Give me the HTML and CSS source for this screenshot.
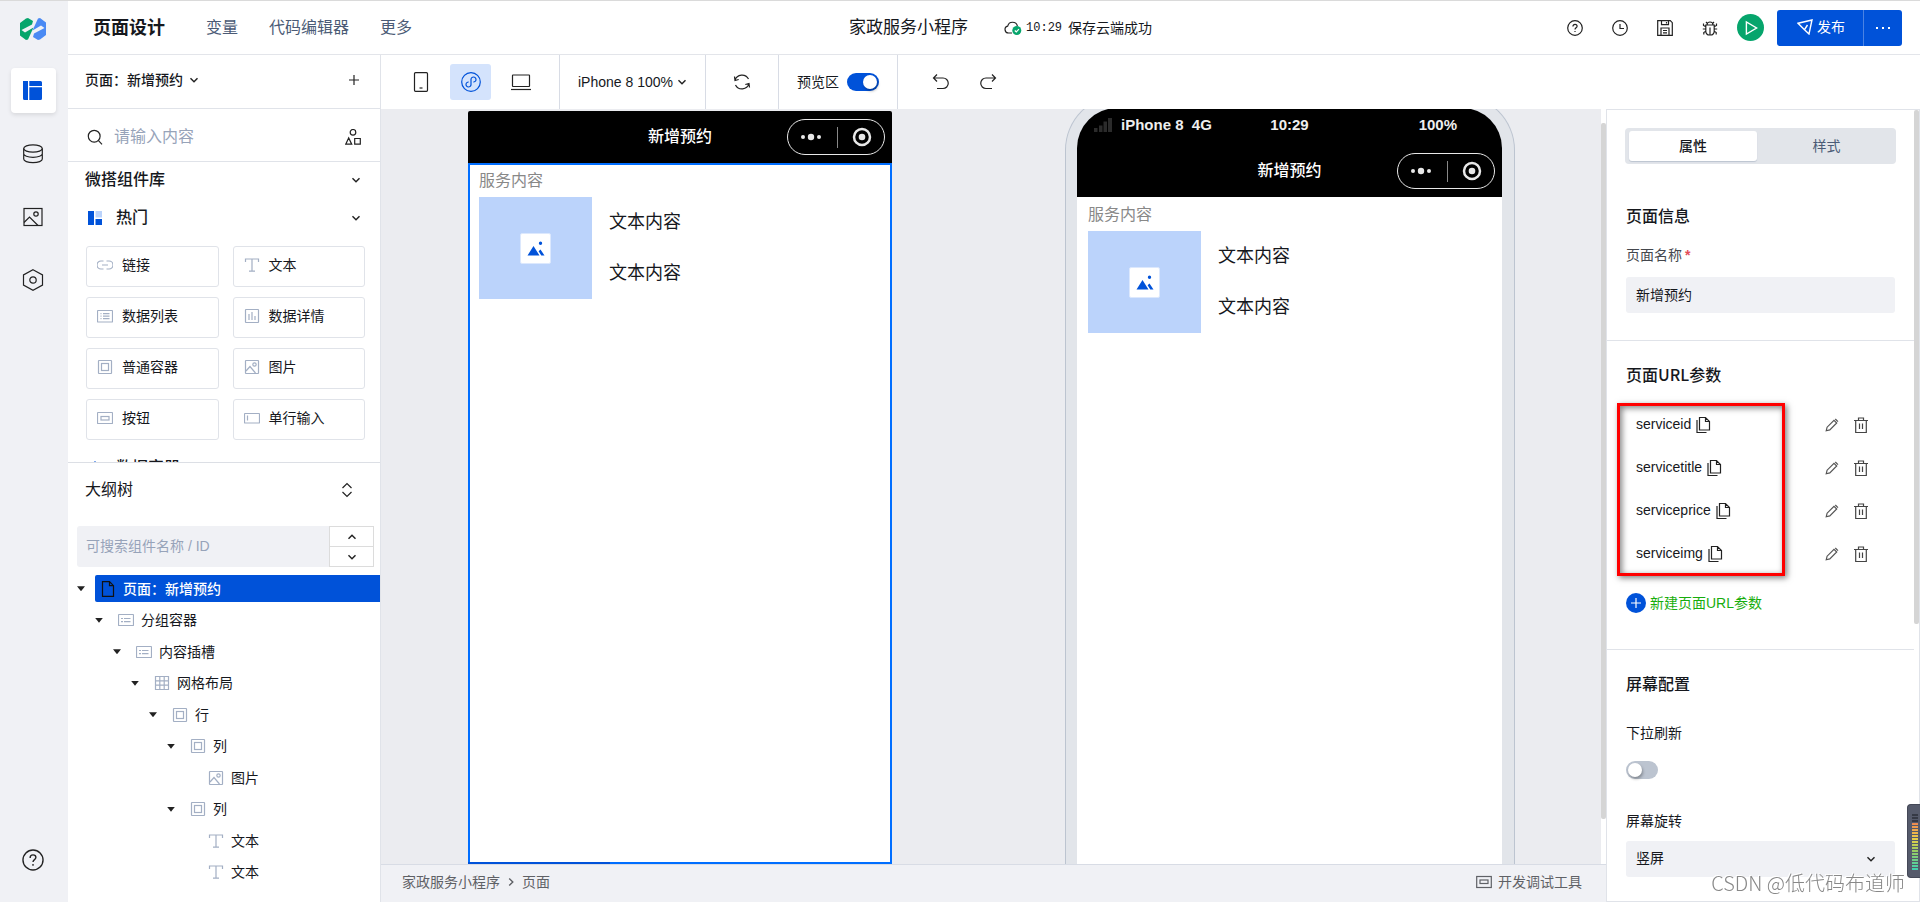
FILE: index.html
```html
<!DOCTYPE html>
<html lang="zh-CN">
<head>
<meta charset="utf-8">
<title>页面设计</title>
<link rel="stylesheet" href="styles.css">
</head>
<body>
<svg class="sprite" aria-hidden="true">
  <symbol id="chev" viewBox="0 0 10 10"><path d="M1.5 3.2 5 6.8 8.500 3.2"/></symbol>
  <symbol id="img" viewBox="0 0 16 16"><rect x="1.500" y="1.500" width="13" height="13" rx=".5"/><circle cx="10.500" cy="5.500" r="1.700"/><path d="m2 12 4-4.500 5.500 6.500"/></symbol>
  <symbol id="text" viewBox="0 0 16 16"><path d="M1.500 5V2h13v3M8 2v12M5 14.200h6"/></symbol>
  <symbol id="box" viewBox="0 0 16 16"><rect x="1.500" y="1.500" width="13" height="13" rx=".5"/><rect x="4.500" y="4.500" width="7" height="7"/></symbol>
  <symbol id="list" viewBox="0 0 16 16"><rect x=".5" y="2.500" width="15" height="11.500" rx=".5"/><path d="M3.500 5.700h1M6 5.700h6.500M3.500 8.200h1M6 8.200h6.500M3.500 10.700h1M6 10.700h6.500"/></symbol>
  <symbol id="group" viewBox="0 0 16 16"><rect x=".5" y="2.500" width="15" height="11" rx=".5"/><path d="M3 6.500h2M6 6.500h6.500M3 9.700h2M6 9.700h6.500"/></symbol>
  <symbol id="grid" viewBox="0 0 16 16"><path d="M1.500 1.500h13v13h-13zM1.500 5.800h13M1.500 10.200h13M5.800 1.500v13M10.200 1.500v13"/></symbol>
  <symbol id="help" viewBox="0 0 16 16"><circle cx="8" cy="8" r="7.300"/><path d="M5.900 6.500c0-1.400.9-2.200 2.100-2.200s2.100.8 2.100 1.900c0 1.500-2.100 1.600-2.100 3.200M8 10.900v1.200"/></symbol>
  <symbol id="copy" viewBox="0 0 16 18"><path d="M4.500 1.500h6l4 4v8.500h-10zM10.500 1.500v4h4M2 4v12.500h9.500"/></symbol>
  <symbol id="pencil" viewBox="0 0 14 14"><path d="m1.200 12.800.9-3.600L9 2.300l2.700 2.700-6.900 6.900zM10.300 1l2.700 2.700"/></symbol>
  <symbol id="trash" viewBox="0 0 14 16"><path d="M0 3.500h14M4.500 3.500V1h5v2.500M1.700 3.500v12h10.600v-12M5.500 6.500v5.500M8.500 6.500v5.500"/></symbol>
  <symbol id="dots" viewBox="0 0 22 8"><circle cx="3" cy="4" r="2"/><circle cx="11" cy="4" r="3.200"/><circle cx="19" cy="4" r="2"/></symbol>
  <symbol id="ring" viewBox="0 0 20 20"><circle cx="10" cy="10" r="8" fill="none" stroke="#e8e8e8" stroke-width="2.500"/><circle cx="10" cy="10" r="3.300" fill="#e8e8e8"/></symbol>
  <symbol id="hill" viewBox="0 0 18 15"><path d="M.5 14.500 6.500 5l6 9.500zM11.600 10.300l1.900-1.800 4 6h-3.200zM13.500.5a1.700 1.700 0 1 1 0 3.400 1.700 1.700 0 0 1 0-3.400z"/></symbol>
</svg>

<div class="app">
  <nav class="rail" aria-label="主导航">
    <svg class="logo" viewBox="0 0 26 22"><path d="M0 5 6 .5 8 0l5 3-1 3.500L1.500 12 5 14.500l8.500-5L8 21.500 6 22l-6-4.500z" fill="#06a56c"/><path d="M26 17 20 21.500 18 22l-5-3 1-3.500L24.500 10 21 7.500l-8.500 5L18 .5 20 0l6 4.500z" fill="#4a8af4"/></svg>
    <button class="rail-btn on" aria-label="页面"><svg viewBox="0 0 20 20"><path d="M0 0h5v19H1.500A1.500 1.500 0 0 1 0 17.500zM6.300 0h11.200A1.500 1.500 0 0 1 19 1.500V5H6.300zM6.300 6.200H19v11.300a1.500 1.500 0 0 1-1.500 1.500H6.300z" fill="#0052d9"/></svg></button>
    <button class="rail-btn" aria-label="数据"><svg class="ln" viewBox="0 0 20 20"><ellipse cx="10" cy="4.500" rx="9.300" ry="3.700"/><path d="M.7 4.500v10.500c0 2 4 3.700 9.300 3.700s9.300-1.700 9.300-3.700v-10.500M.7 9.700c0 2 4 3.700 9.300 3.700s9.300-1.700 9.300-3.700"/></svg></button>
    <button class="rail-btn" aria-label="素材"><svg class="ln" viewBox="0 0 20 20"><rect x="1" y="1.500" width="18" height="17"/><circle cx="13" cy="7" r="2.200"/><path d="m1 15.500 5.500-5.500 8.500 8.500"/></svg></button>
    <button class="rail-btn" aria-label="设置"><svg class="ln" viewBox="0 0 20 20"><path d="m10-.2 9.500 5.100v10.200L10 20.200.5 15.100V4.900z"/><circle cx="10" cy="10" r="3.200"/></svg></button>
    <button class="rail-btn last" aria-label="帮助"><svg class="ln"><use href="#help"/></svg></button>
  </nav>

  <div class="main">
    <header class="header">
      <h1>页面设计</h1>
      <nav class="menu"><a href="#">变量</a><a href="#">代码编辑器</a><a href="#">更多</a></nav>
      <div class="project">
        <strong>家政服务小程序</strong>
        <span class="saved">
          <svg viewBox="0 0 18 16"><path d="M8 13H4.500a3.500 3.500 0 0 1-.8-6.900A5 5 0 0 1 13.400 6" fill="none" stroke="#222" stroke-width="1.200"/><circle cx="12.800" cy="10.500" r="4.500" fill="#06a56c"/><path d="m10.800 10.500 1.500 1.500 2.600-2.800" fill="none" stroke="#fff" stroke-width="1.200"/></svg>
          <time>10:29</time><span>保存云端成功</span>
        </span>
      </div>
      <div class="actions">
        <button class="plain" aria-label="帮助"><svg class="ln"><use href="#help"/></svg></button>
        <button class="plain" aria-label="历史"><svg class="ln" viewBox="0 0 16 16"><circle cx="8" cy="8" r="7.300"/><path d="M8 4v4.500h4"/></svg></button>
        <button class="plain" aria-label="保存"><svg class="ln" viewBox="0 0 16 16"><path d="M.7.7h12.600l2 2v12.600H.7zM4.500.7v4h7v-4M9.500 2v1.500M4 15.300V8h8v7.300M6 10.500h4M6 12.800h4"/></svg></button>
        <button class="plain" aria-label="调试"><svg class="ln" viewBox="0 0 16 16"><path d="M5 5a3 3 0 0 1 6 0M3.800 5h8.400v6.500a3.500 3.500 0 0 1-3.500 3.500H7.300a3.500 3.500 0 0 1-3.500-3.500zM8 7.500V15M4 2l1.500 1.500M12 2l-1.500 1.500M1.500 3.500v2l2.300 1.200M14.500 3.500v2l-2.300 1.200M.8 9h3M12.200 9h3M1.800 14.500v-2l2-1.200M14.200 14.500v-2l-2-1.200"/></svg></button>
        <button class="play" aria-label="运行"><svg viewBox="0 0 14 16"><path d="M1.500 1.500v13L12.500 8z" fill="none" stroke="#fff" stroke-width="1.500"/></svg></button>
        <div class="publish">
          <button class="pub"><svg viewBox="0 0 16 16"><path d="M1 4.200 15 1 12 15 7.500 10.700zM7.500 10.700 10.500 6" fill="none" stroke="#fff" stroke-width="1.400"/></svg>发布</button>
          <button class="pub-more" aria-label="更多操作"><svg viewBox="0 0 16 4"><path d="M1 1h2v2H1zM7 1h2v2H7zM13 1h2v2h-2z" fill="#fff"/></svg></button>
        </div>
      </div>
    </header>

    <div class="body">
      <aside class="side">
        <div class="page-head">
          <button class="page-pick">页面：新增预约<svg class="ln chev"><use href="#chev"/></svg></button>
          <button class="plain" aria-label="新建页面"><svg class="ln plus" viewBox="0 0 10 10"><path d="M5 0v10M0 5h10"/></svg></button>
        </div>
        <div class="search">
          <svg class="ln" viewBox="0 0 16 16"><circle cx="7.200" cy="7.200" r="5.900"/><path d="m11.300 11.300 3.700 4"/></svg>
          <input type="search" placeholder="请输入内容" aria-label="搜索组件">
          <svg class="ln" viewBox="0 0 16 16"><circle cx="8" cy="3.300" r="2.800"/><path d="M.7 15.200 3.700 9l3 6.200zM9.700 9.500h5.600v5.700H9.700z"/></svg>
        </div>
        <div class="library">
          <button class="lib-row"><span>微搭组件库</span><svg class="ln chev"><use href="#chev"/></svg></button>
          <button class="lib-row sub"><svg class="cat" viewBox="0 0 14 14"><path d="M0 0h6v14H0zM7.500 8H14v6H7.500z" fill="#0052d9"/><path d="M7.500 0H14v6.500H7.500z" fill="#bbd3fb"/></svg><span>热门</span><svg class="ln chev"><use href="#chev"/></svg></button>
          <div class="cards">
            <button class="card"><svg class="gi" viewBox="0 0 16 16"><path d="M6.500 4H4a4 4 0 0 0 0 8h2.500M9.500 4H12a4 4 0 0 1 0 8H9.500M5 8h6"/></svg>链接</button>
            <button class="card"><svg class="gi"><use href="#text"/></svg>文本</button>
            <button class="card"><svg class="gi"><use href="#list"/></svg>数据列表</button>
            <button class="card"><svg class="gi" viewBox="0 0 16 16"><rect x="1.500" y="1.500" width="13" height="13" rx=".5"/><path d="M5 6v6M8 4v8M11 8v4"/></svg>数据详情</button>
            <button class="card"><svg class="gi"><use href="#box"/></svg>普通容器</button>
            <button class="card"><svg class="gi"><use href="#img"/></svg>图片</button>
            <button class="card"><svg class="gi" viewBox="0 0 16 16"><rect x=".5" y="2.500" width="15" height="11" rx=".5"/><rect x="4" y="6.500" width="8" height="3.500"/></svg>按钮</button>
            <button class="card"><svg class="gi" viewBox="0 0 16 16"><rect x=".5" y="3.500" width="15" height="9.500" rx=".5"/><path d="M3.500 5.500v5"/></svg>单行输入</button>
          </div>
          <button class="lib-row sub"><svg class="cat" viewBox="0 0 14 14"><path d="m7 0 7 7-7 7-7-7z" fill="#0052d9"/></svg><span>数据容器</span></button>
        </div>
        <div class="outline">
          <div class="outline-head"><h2>大纲树</h2><button class="plain" aria-label="展开"><svg class="ln" viewBox="0 0 12 16"><path d="m1.500 6 4.500-4.500L10.500 6M1.500 10 6 14.500l4.500-4.500"/></svg></button></div>
          <div class="finder">
            <input type="text" placeholder="可搜索组件名称 / ID" aria-label="搜索大纲树">
            <div class="steps"><button aria-label="上一个"><svg class="ln chev up"><use href="#chev"/></svg></button><button aria-label="下一个"><svg class="ln chev"><use href="#chev"/></svg></button></div>
          </div>
          <ul class="tree">
            <li class="d0 sel"><i class="arrow"></i><span class="node"><svg viewBox="0 0 16 16"><path d="M2.500.7h7l4 4v10.600h-11zM9.500.7v4h4"/></svg>页面：新增预约</span></li>
            <li class="d1"><i class="arrow"></i><span class="node"><svg class="gi"><use href="#group"/></svg>分组容器</span></li>
            <li class="d2"><i class="arrow"></i><span class="node"><svg class="gi"><use href="#group"/></svg>内容插槽</span></li>
            <li class="d3"><i class="arrow"></i><span class="node"><svg class="gi"><use href="#grid"/></svg>网格布局</span></li>
            <li class="d4"><i class="arrow"></i><span class="node"><svg class="gi"><use href="#box"/></svg>行</span></li>
            <li class="d5"><i class="arrow"></i><span class="node"><svg class="gi"><use href="#box"/></svg>列</span></li>
            <li class="d6"><span class="node"><svg class="gi"><use href="#img"/></svg>图片</span></li>
            <li class="d5"><i class="arrow"></i><span class="node"><svg class="gi"><use href="#box"/></svg>列</span></li>
            <li class="d6"><span class="node"><svg class="gi"><use href="#text"/></svg>文本</span></li>
            <li class="d6"><span class="node"><svg class="gi"><use href="#text"/></svg>文本</span></li>
          </ul>
        </div>
      </aside>

      <div class="work">
        <div class="toolbar">
          <div class="tools devices">
            <button class="tool" aria-label="手机"><svg class="ln" viewBox="0 0 20 20"><rect x="3.500" y=".7" width="13" height="18.600" rx="1"/><path d="M8.500 16h3"/></svg></button>
            <button class="tool on" aria-label="小程序"><svg class="ln" viewBox="0 0 20 20"><circle cx="10" cy="10" r="9.300"/><path d="M12.300 10a2.500 2.500 0 1 0-2.300-2.600v5.200A2.500 2.500 0 1 1 7.700 10"/></svg></button>
            <button class="tool" aria-label="电脑"><svg class="ln" viewBox="0 0 20 20"><rect x="1.500" y="3" width="17" height="11.500" rx=".5"/><path d="M0 17.500h20"/></svg></button>
          </div>
          <div class="tools"><button class="zoom">iPhone 8 100%<svg class="ln chev"><use href="#chev"/></svg></button></div>
          <div class="tools"><button class="plain" aria-label="刷新"><svg class="ln wide" viewBox="0 0 18 18"><path d="M2 7.300a7.300 7.300 0 0 1 13.500-1.200M16 10.700a7.300 7.300 0 0 1-13.500 1.200M1.500 3.500 2 7.500l3.700-1M16.500 14.500l-.5-4-3.700 1"/></svg></button></div>
          <div class="tools"><label class="preview">预览区<input type="checkbox" class="switch" checked></label></div>
          <div class="tools history">
            <button class="plain" aria-label="撤销"><svg class="ln wide" viewBox="0 0 18 18"><path d="M5 1.500 1.500 5 5 8.500M1.500 5H11a5.200 5.200 0 0 1 0 10.500H5"/></svg></button>
            <button class="plain" aria-label="重做"><svg class="ln wide" viewBox="0 0 18 18"><path d="M13 1.500 16.500 5 13 8.500M16.500 5H7a5.200 5.200 0 0 0 0 10.500h6"/></svg></button>
          </div>
        </div>

        <div class="split">
          <main class="stage">
            <div class="canvas">
              <section class="editor">
                <div class="bar"><span>新增预约</span><div class="capsule"><svg class="dots"><use href="#dots"/></svg><i></i><svg class="ring"><use href="#ring"/></svg></div></div>
                <div class="screen framed">
                  <p class="caption">服务内容</p>
                  <div class="row"><div class="photo"><span><svg><use href="#hill"/></svg></span></div><div class="texts"><p>文本内容</p><p>文本内容</p></div></div>
                </div>
              </section>
              <section class="device">
                <div class="glass">
                  <div class="status"><span><svg viewBox="0 0 18 14"><path d="M0 10h3.500v4H0zM5 7.500h3.500V14H5zM9.500 3.500H13V14H9.500zM14 0h4v14h-4z" fill="#2b2b2b"/></svg>iPhone 8 &nbsp;4G</span><span>10:29</span><span>100%</span></div>
                  <div class="bar"><span>新增预约</span><div class="capsule"><svg class="dots"><use href="#dots"/></svg><i></i><svg class="ring"><use href="#ring"/></svg></div></div>
                  <div class="screen">
                    <p class="caption">服务内容</p>
                    <div class="row"><div class="photo"><span><svg><use href="#hill"/></svg></span></div><div class="texts"><p>文本内容</p><p>文本内容</p></div></div>
                  </div>
                </div>
              </section>
            </div>
            <div class="track"><div class="thumb"></div></div>
            <footer class="crumbs">
              <nav><a href="#">家政服务小程序</a><svg class="ln chev right"><use href="#chev"/></svg><a href="#">页面</a></nav>
              <button><svg class="ln" viewBox="0 0 16 14"><rect x=".7" y="1.500" width="14.600" height="11"/><rect x="4" y="5" width="8" height="3.500"/></svg>开发调试工具</button>
            </footer>
          </main>

          <aside class="props">
            <div class="tabs"><button class="on">属性</button><button>样式</button></div>
            <section>
              <h2>页面信息</h2>
              <label class="name-label" for="pname">页面名称<b>*</b></label>
              <input id="pname" class="field" type="text" value="新增预约">
            </section>
            <section class="params">
              <h2>页面URL参数</h2>
              <ul>
                <li><span>serviceid</span><svg class="ln copy"><use href="#copy"/></svg><button class="plain edit" aria-label="编辑 serviceid"><svg class="ln"><use href="#pencil"/></svg></button><button class="plain del" aria-label="删除 serviceid"><svg class="ln"><use href="#trash"/></svg></button></li>
                <li><span>servicetitle</span><svg class="ln copy"><use href="#copy"/></svg><button class="plain edit" aria-label="编辑 servicetitle"><svg class="ln"><use href="#pencil"/></svg></button><button class="plain del" aria-label="删除 servicetitle"><svg class="ln"><use href="#trash"/></svg></button></li>
                <li><span>serviceprice</span><svg class="ln copy"><use href="#copy"/></svg><button class="plain edit" aria-label="编辑 serviceprice"><svg class="ln"><use href="#pencil"/></svg></button><button class="plain del" aria-label="删除 serviceprice"><svg class="ln"><use href="#trash"/></svg></button></li>
                <li><span>serviceimg</span><svg class="ln copy"><use href="#copy"/></svg><button class="plain edit" aria-label="编辑 serviceimg"><svg class="ln"><use href="#pencil"/></svg></button><button class="plain del" aria-label="删除 serviceimg"><svg class="ln"><use href="#trash"/></svg></button></li>
              </ul>
              <button class="add"><svg viewBox="0 0 20 20"><circle cx="10" cy="10" r="10" fill="#0052d9"/><path d="M10 5v10M5 10h10" stroke="#fff" stroke-width="1.200"/></svg>新建页面URL参数</button>
            </section>
            <section class="config">
              <h2>屏幕配置</h2>
              <label for="pull">下拉刷新</label>
              <input id="pull" type="checkbox" class="switch">
              <label for="rotate">屏幕旋转</label>
              <div class="select"><select id="rotate" class="field"><option>竖屏</option><option>横屏</option></select><svg class="ln chev"><use href="#chev"/></svg></div>
            </section>
            <div class="side-thumb"></div>
          </aside>
        </div>
      </div>
    </div>
  </div>
</div>
<div class="meter"><i></i></div>
<div class="watermark">CSDN @低代码布道师</div>
</body>
</html>
```
FILE: styles.css
```css
*, *::before, *::after { box-sizing: border-box; }
body { margin: 0; font: 14px/20px "Liberation Sans", "Noto Sans CJK SC", sans-serif; color: #16181d; background: #fff; overflow: hidden; }
h1, h2, p, ul { margin: 0; padding: 0; }
ul { list-style: none; }
button, input, select { font: inherit; color: inherit; border: 0; padding: 0; margin: 0; background: none; outline: 0; }
input::placeholder { color: #97a3b9; opacity: 1; }
a { color: inherit; text-decoration: none; }
svg { display: block; flex: none; width: 16px; height: 16px; }
.sprite { display: none; }
.ln { fill: none; stroke: #222; stroke-width: 1.200; }
.gi { fill: none; stroke: #a3afc4; stroke-width: 1.200; }
.chev { width: 10px; height: 10px; stroke-width: 1.400; }
.chev.up { transform: rotate(180deg); }
.chev.right { transform: rotate(-90deg); }
.plain { display: flex; align-items: center; justify-content: center; }
h2 { font-size: 16px; line-height: 24px; font-weight: 500; }

.app { display: flex; height: 100vh; border-top: 1px solid #dadada; }
.rail { width: 68px; flex: none; background: #f0f1f5; display: flex; flex-direction: column; align-items: center; gap: 18px; padding: 17px 2px 20px 0; }
.logo { width: 26px; height: 22px; margin-bottom: 10px; }
.rail-btn { width: 45px; height: 45px; display: flex; align-items: center; justify-content: center; border-radius: 4px; }
.rail-btn svg { width: 20px; height: 20px; overflow: visible; }
.rail-btn.on { background: #fff; box-shadow: 0 2px 4px rgba(0, 0, 0, .1); }
.rail-btn.last { margin-top: auto; }
.rail-btn.last svg { stroke-width: 1; width: 22px; height: 22px; }

.main { flex: 1; min-width: 0; display: flex; flex-direction: column; }
.header { flex: none; height: 54px; border-bottom: 1px solid #e3e5ea; display: flex; align-items: center; padding: 0 18px 0 25px; }
h1 { font-size: 18px; line-height: 26px; font-weight: 700; }
.menu { display: flex; gap: 31px; margin-left: 41px; font-size: 16px; color: #4b5b76; }
.project { display: flex; align-items: center; gap: 36px; padding-left: 437px; }
.project strong { font-size: 17px; font-weight: 400; line-height: 24px; }
.saved { display: flex; align-items: center; }
.saved svg { width: 18px; margin-right: 4px; }
.saved time { font: 12px/20px "Liberation Mono", monospace; margin-right: 6px; }
.actions { margin-left: auto; display: flex; align-items: center; }
.actions .plain { width: 45px; height: 32px; }
.play { width: 27px; height: 27px; border-radius: 50%; background: #06a56c; display: flex; align-items: center; justify-content: center; margin: 0 13px 0 5px; }
.play svg { width: 14px; padding-left: 1px; }
.publish { display: flex; height: 36px; border-radius: 3px; background: #0052d9; color: #fff; }
.pub { display: flex; align-items: center; gap: 4px; padding: 0 18px 2px 20px; }
.pub-more { width: 39px; display: flex; align-items: center; justify-content: center; border-left: 1px solid #4a83e3; }
.pub-more svg { height: 4px; }

.body { flex: 1; min-height: 0; display: flex; }
.side { width: 313px; flex: none; display: flex; flex-direction: column; border-right: 1px solid #e0e3e9; }
.page-head, .search { display: flex; align-items: center; border-bottom: 1px solid #e0e3e9; flex: none; }
.page-head { height: 54px; padding: 0 21px 3px 17px; justify-content: space-between; font-weight: 500; }
.page-pick { display: flex; align-items: center; gap: 6px; font-weight: 500; }
.plus { width: 10px; height: 10px; }
.search { height: 53px; padding: 3px 19px 0; }
.search input { flex: 1; min-width: 0; font-size: 16px; padding-left: 11px; }
.library { flex: 0 0 301px; overflow: hidden; border-bottom: 1px solid #dcdfe5; padding: 1px 15px 0 17px; }
.lib-row { display: flex; align-items: center; width: 100%; height: 34px; padding-right: 4px; font-size: 16px; font-weight: 500; }
.lib-row > .chev { margin-left: auto; }
.lib-row.sub { height: 42px; gap: 14px; padding-left: 3px; }
.cat { width: 14px; height: 14px; }
.cards { display: grid; grid-template-columns: 1fr 1fr; gap: 10px 14px; padding: 7px 0 7px 1px; }
.card { height: 41px; display: flex; align-items: center; gap: 9px; padding: 0 0 3px 10px; border: 1px solid #e0e3e9; border-radius: 3px; }

.outline { flex: 1; min-height: 0; display: flex; flex-direction: column; padding: 15px 0 14px 9px; }
.outline-head { display: flex; align-items: center; justify-content: space-between; padding: 0 27px 0 8px; }
.outline-head h2 { font-weight: 400; }
.outline-head svg { width: 12px; }
.finder { display: flex; height: 41px; margin: 24px 6px 6px 0; }
.finder input { flex: 1; min-width: 0; background: #f0f1f5; border-radius: 3px 0 0 3px; padding: 0 0 2px 9px; }
.steps { width: 45px; display: grid; grid-template-rows: 19px 1fr; border: 1px solid #dcdcdc; }
.steps button { display: flex; align-items: center; justify-content: center; }
.steps button + button { border-top: 1px solid #dcdcdc; }
.tree { flex: 1; display: grid; grid-auto-rows: 1fr; }
.tree li { display: flex; align-items: center; }
.arrow { width: 8px; height: 5px; background: #222; clip-path: polygon(0 0, 100% 0, 50% 100%); }
.node { flex: 1; display: flex; align-items: center; gap: 7px; height: 27px; margin-left: 10px; padding-left: 5px; }
.sel .node { background: #0052d9; color: #fff; border-radius: 2px 0 0 2px; font-weight: 500; }
.sel svg { fill: none; stroke: #111; stroke-width: 1.200; }
.d1 { padding-left: 18px; }
.d2 { padding-left: 36px; }
.d3 { padding-left: 54px; }
.d4 { padding-left: 72px; }
.d5 { padding-left: 90px; }
.d6 { padding-left: 116px; }

.work { flex: 1; min-width: 0; display: flex; flex-direction: column; }
.toolbar { height: 54px; flex: none; display: flex; }
.tools { display: flex; align-items: center; padding: 0 18px; border-right: 1px solid #d8dce5; }
.tools:last-child { border-right: 0; }
.devices { gap: 9px; padding-left: 19px; }
.tool { width: 41px; height: 36px; display: flex; align-items: center; justify-content: center; border-radius: 3px; }
.tool svg { width: 20px; height: 20px; }
.tool.on { background: #d4e3fc; }
.tool.on svg { stroke: #0052d9; }
.zoom { display: flex; align-items: center; gap: 4px; }
.tools .plain { width: 36px; }
.wide { width: 18px; height: 18px; }
.preview { display: flex; align-items: center; gap: 8px; }
.switch { appearance: none; width: 32px; height: 18px; border-radius: 9px; background: #bcc4d0; padding: 2px; display: flex; }
.switch::before { content: ""; width: 14px; height: 14px; border-radius: 50%; background: #fff; box-shadow: 1px 2px 3px rgba(0, 0, 0, .3); }
.switch:checked { background: #0052d9; justify-content: flex-end; }
.history { gap: 11px; padding-left: 25px; }

.split { flex: 1; min-height: 0; display: flex; }
.stage { flex: 1; min-width: 0; display: grid; grid-template-columns: 1fr 5px; grid-template-rows: minmax(0, 1fr) auto; }
.canvas { background: #ebecf0; overflow: hidden; display: flex; justify-content: space-between; padding: 0 86px 0 87px; }
.track { padding: 14px 0 45px; display: flex; }
.thumb { flex: 1; background: #d5d5d5; border-radius: 2px; }
.editor { width: 424px; margin-top: 2px; display: flex; flex-direction: column; }
.bar { flex: none; height: 52px; background: #000; color: #fff; font-size: 16px; display: grid; grid-template-columns: 1fr auto 1fr; align-items: center; padding: 0 7px; border-radius: 2px 2px 0 0; }
.bar > span { grid-column: 2; font-weight: 500; }
.capsule { justify-self: end; width: 98px; height: 36px; border: 1px solid #e8e8e8; border-radius: 18px; display: flex; align-items: center; justify-content: space-between; padding: 0 12px; }
.capsule i { width: 1px; height: 21px; background: #888; }
.dots { width: 22px; height: 8px; fill: #e8e8e8; }
.ring { width: 20px; height: 20px; }
.screen { flex: 1; background: #fff; padding: 8px 11px; }
.framed { position: relative; border: 2px solid #006eff; padding: 6px 9px; }
.framed::after { content: ""; position: absolute; left: -2px; bottom: -2px; width: 142px; height: 2px; background: #0052d9; }
.caption { font-size: 16px; line-height: 20px; color: #888; margin-bottom: 6px; }
.row { display: flex; gap: 17px; }
.photo { width: 113px; height: 102px; background: #bbd3fb; display: flex; align-items: center; justify-content: center; }
.photo span { width: 31px; height: 31px; border: 1px solid #dce8fd; border-radius: 2px; background: #fff; display: flex; align-items: center; justify-content: center; }
.photo svg { width: 18px; height: 15px; fill: #0052d9; }
.texts { flex: 1; font-size: 18px; line-height: 51px; }
.device { width: 450px; margin-top: -14px; padding: 12px 12px 0 11px; display: flex; flex-direction: column; background: #e2e5ea; border: 1px solid #bcc4d0; border-width: 1px 1px 0; border-radius: 55px 55px 0 0; }
.glass { flex: 1; display: flex; flex-direction: column; overflow: hidden; border-radius: 40px 40px 0 0; }
.status { height: 37px; background: #000; color: #eee; font-size: 15px; font-weight: 700; display: grid; grid-template-columns: 1fr auto 1fr; align-items: center; padding: 0 17px 3px; }
.status span { display: flex; align-items: center; gap: 9px; }
.status span:last-child { justify-content: flex-end; padding-right: 28px; }
.status svg { width: 18px; height: 14px; }
.glass .bar { border-radius: 0; }
.crumbs { grid-column: 1 / -1; height: 38px; background: #f0f1f5; border-top: 1px solid #d8dce5; display: flex; align-items: center; justify-content: space-between; padding: 0 24px 4px 21px; color: #5f6166; }
.crumbs nav, .crumbs button { display: flex; align-items: center; gap: 6px; }
.crumbs .ln { stroke: #5f6166; }

.props { position: relative; width: 314px; flex: none; overflow: hidden; border: 1px solid #e0e3e9; padding-right: 5px; }
.tabs { margin: 18px 18px 0; display: grid; grid-template-columns: 128px 1fr; padding: 3px 0 3px 4px; height: 36px; border-radius: 4px; background: #e2e5ea; color: #4b5b76; }
.tabs .on { background: #fff; color: #16181d; border-radius: 3px; font-weight: 500; box-shadow: 0 1px 1px #bcc4d0; }
.props section { padding: 21px 19px 27px; display: flex; flex-direction: column; border-bottom: 1px solid #e0e3e9; }
.props .tabs + section { padding-top: 39px; }
.props h2 { font-family: "Noto Sans CJK SC", sans-serif; }
.name-label { margin: 18px 0 12px; color: #44474d; }
.name-label b { color: #e34d59; margin-left: 3px; }
.field { width: 100%; height: 36px; background: #f0f1f5; border-radius: 3px; padding: 0 10px 2px; }
.props .params { padding-bottom: 36px; }
.params ul { position: relative; margin: 17px 0 18px; }
.params ul::after { content: ""; position: absolute; left: -9px; top: 0; width: 168px; height: 173px; border: 3px solid #f00; box-shadow: 2px 2px 6px rgba(0, 0, 0, .5), inset 2px 2px 6px rgba(0, 0, 0, .5); pointer-events: none; }
.params li { display: flex; align-items: center; height: 43px; padding: 0 27px 0 10px; }
.params li span { padding-bottom: 2px; }
.copy { width: 16px; height: 18px; margin-left: 4px; }
.edit { margin-left: auto; }
.edit svg { width: 14px; height: 14px; stroke: #555; }
.del { margin-left: 15px; }
.del svg { width: 14px; stroke: #444; }
.add { display: flex; align-items: center; gap: 4px; color: #17ad0c; }
.add svg { width: 20px; height: 20px; }
.config h2 { margin-bottom: 28px; }
.config .switch { margin: 18px 0 32px; }
.select { display: grid; align-items: center; margin-top: 10px; }
.select > * { grid-area: 1 / 1; }
.select select { appearance: none; }
.select svg { justify-self: end; margin-right: 19px; pointer-events: none; }
.side-thumb { position: absolute; right: 0; top: 0; width: 5px; height: 514px; border-radius: 2px; background: #d5d5d5; }

.meter { position: fixed; right: 0; bottom: 24px; width: 13px; height: 74px; background: #555a6b; border: 1px solid #444857; border-right: 0; border-radius: 4px 0 0 4px; padding: 9px 2px 7px 4px; }
.meter i { display: block; height: 100%; background: repeating-linear-gradient(transparent 0 2px, #555a6b 2px 3px), linear-gradient(#353945 0 16%, #f08c50 17%, #e8d048 45%, #9ccc60 65%, #40d0b0); }
.watermark { position: fixed; right: 15px; bottom: 6px; font: 300 20px/26px "Noto Sans CJK SC", sans-serif; color: #888; text-shadow: 1px 1px 0 #fff, -1px -1px 0 #fff; }
```
